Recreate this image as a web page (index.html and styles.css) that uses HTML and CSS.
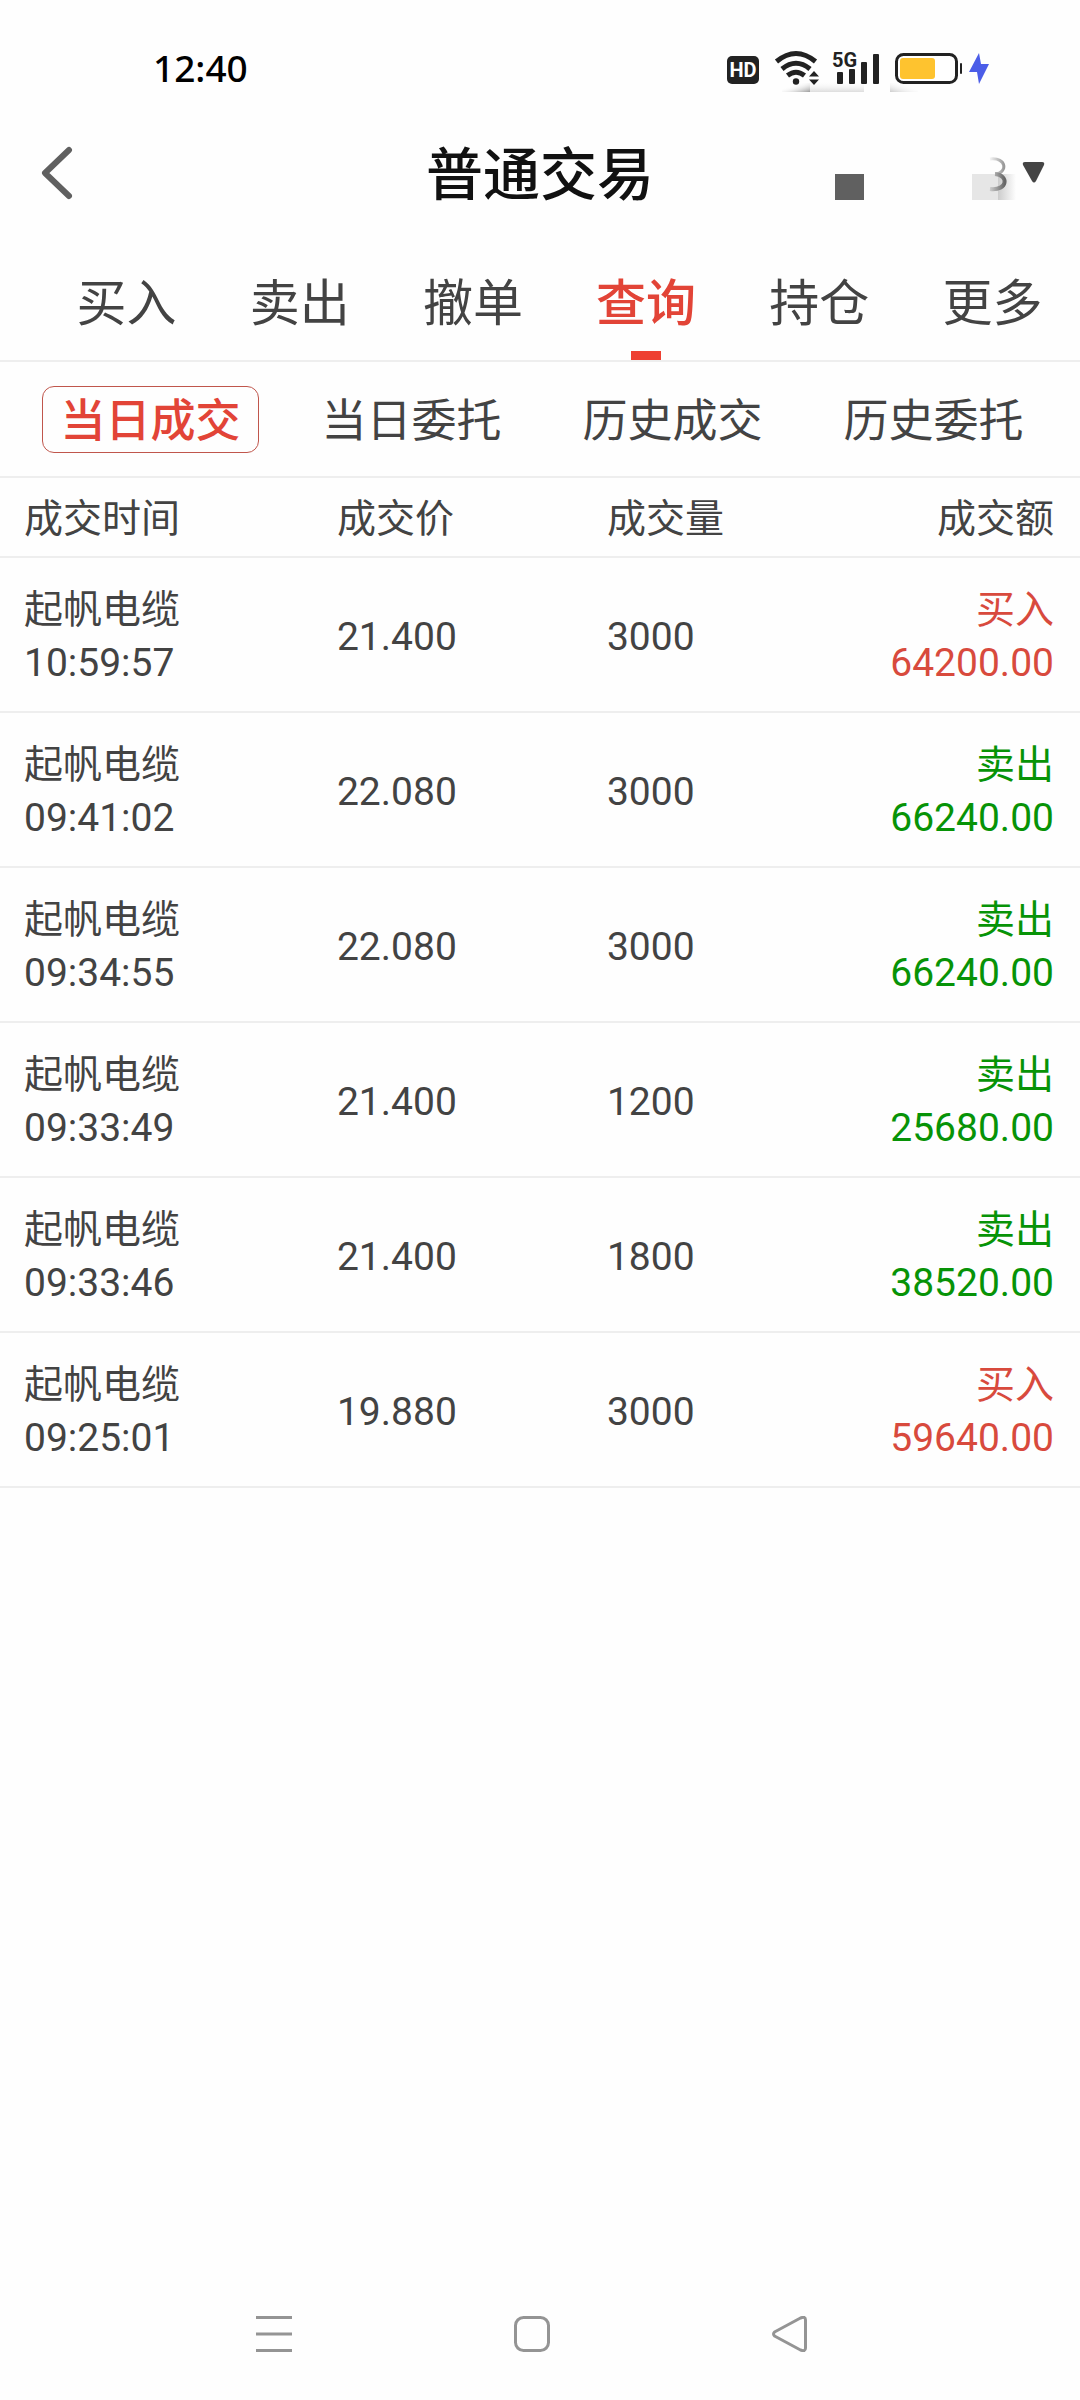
FILE: index.html
```html
<!DOCTYPE html>
<html lang="zh-CN">
<head>
<meta charset="utf-8">
<meta name="viewport" content="width=device-width, initial-scale=1">
<title>普通交易</title>
<link rel="stylesheet" href="styles.css">
</head>
<body>
<div class="status">
  <time class="clock">12:40</time>
  <svg class="status-icons" viewBox="724 48 268 46" aria-hidden="true">
    <defs>
      <linearGradient id="fade-dark" x1="0" y1="0" x2="1" y2="1"><stop offset=".3" stop-color="#fff" stop-opacity="0"/><stop offset="1" stop-color="#999"/></linearGradient>
      <linearGradient id="fade-light" x1="0" y1="0" x2="0" y2="1"><stop offset="0" stop-color="#fff" stop-opacity="0"/><stop offset="1" stop-color="#ddd"/></linearGradient>
      <linearGradient id="fade-left" x1="1" y1="0" x2="0" y2="1"><stop offset=".3" stop-color="#fff" stop-opacity="0"/><stop offset="1" stop-color="#ccc"/></linearGradient>
    </defs>
    <rect x="782" y="83" width="28" height="9" fill="url(#fade-dark)"/>
    <rect x="810" y="81" width="54" height="11" fill="url(#fade-light)"/>
    <rect x="890" y="83" width="28" height="9" fill="url(#fade-left)"/>
    <rect x="727" y="56" width="32" height="28" rx="5" fill="#222"/>
    <text class="hd" x="743" y="77" text-anchor="middle">HD</text>
    <g fill="none" stroke="#222" stroke-width="5">
      <path d="M776.500 61.500Q796 45.500 815.500 61.500"/>
      <path d="M782 69Q796 57.500 810 69"/>
      <path d="M787.500 75.500Q796 69 804.500 75.500"/>
    </g>
    <circle cx="796" cy="81.500" r="3.200" fill="#222"/>
    <path d="M814 71l5 5.500h-10zM814 85l5-5.500h-10z" fill="#222"/>
    <text class="net" x="832" y="67">5G</text>
    <g fill="#222">
      <rect x="837" y="72" width="6" height="12" rx="1"/>
      <rect x="849" y="69" width="6" height="15" rx="1"/>
      <rect x="861" y="62" width="6" height="22" rx="1"/>
      <rect x="873" y="54" width="6" height="30" rx="1"/>
    </g>
    <rect x="896.500" y="54.500" width="60" height="28" rx="7" fill="#fff" stroke="#222" stroke-width="3"/>
    <rect x="900" y="58" width="35" height="21" rx="3" fill="#fec32f"/>
    <rect x="960" y="63" width="2" height="11" rx="1" fill="#222"/>
    <path d="M979 53L969 72h8l2 12 10-20h-8z" fill="#4b5de8"/>
  </svg>
</div>

<header class="header">
  <button class="back" type="button" aria-label="返回">
    <svg viewBox="0 0 32 54" fill="none" stroke="#606060" stroke-width="6" stroke-linecap="round" stroke-linejoin="round"><path d="M28 4L4 27l24 23"/></svg>
  </button>
  <h1 class="title">普通交易</h1>
  <button class="account" type="button" aria-label="切换账户">
    <svg viewBox="0 0 212 48">
      <defs>
        <linearGradient id="digit-top" x1="0" y1="0" x2="1" y2="0"><stop offset="0" stop-color="#f4f4f4"/><stop offset="1" stop-color="#999"/></linearGradient>
        <linearGradient id="digit-bottom" x1="0" y1="0" x2="1" y2="0"><stop offset="0" stop-color="#ccc"/><stop offset="1" stop-color="#666"/></linearGradient>
        <linearGradient id="veil" x1="0" y1="0" x2="1" y2="0"><stop offset="0" stop-color="#ccc"/><stop offset="1" stop-color="#fefefe"/></linearGradient>
      </defs>
      <rect x="3" y="25" width="29" height="26" fill="#606060"/>
      <rect x="140" y="25" width="26" height="26" fill="#e6e6e6"/>
      <rect x="166" y="25" width="18" height="26" fill="url(#veil)"/>
      <path d="M158 10c17-2 18 14 5 15" fill="none" stroke="url(#digit-top)" stroke-width="3"/>
      <path d="M163 25c14 1 13 17-5 15" fill="none" stroke="url(#digit-bottom)" stroke-width="4"/>
      <path d="M193 13h17q3 0 2 3l-8 16q-2 3-4 0l-9-16q-1-3 2-3z" fill="#444"/>
    </svg>
  </button>
</header>

<nav class="tabs">
  <a href="#buy">买入</a>
  <a href="#sell">卖出</a>
  <a href="#cancel">撤单</a>
  <a href="#query" class="active" aria-current="page">查询</a>
  <a href="#positions">持仓</a>
  <a href="#more">更多</a>
</nav>

<nav class="filters">
  <a href="#today-deals" class="active" aria-current="page">当日成交</a>
  <a href="#today-orders">当日委托</a>
  <a href="#past-deals">历史成交</a>
  <a href="#past-orders">历史委托</a>
</nav>

<main>
  <table class="deals">
    <thead>
      <tr><th class="time">成交时间</th><th class="price">成交价</th><th class="volume">成交量</th><th class="amount">成交额</th></tr>
    </thead>
    <tbody>
      <tr><td>起帆电缆<br>10:59:57</td><td>21.400</td><td>3000</td><td class="amount buy">买入<br>64200.00</td></tr>
      <tr><td>起帆电缆<br>09:41:02</td><td>22.080</td><td>3000</td><td class="amount sell">卖出<br>66240.00</td></tr>
      <tr><td>起帆电缆<br>09:34:55</td><td>22.080</td><td>3000</td><td class="amount sell">卖出<br>66240.00</td></tr>
      <tr><td>起帆电缆<br>09:33:49</td><td>21.400</td><td>1200</td><td class="amount sell">卖出<br>25680.00</td></tr>
      <tr><td>起帆电缆<br>09:33:46</td><td>21.400</td><td>1800</td><td class="amount sell">卖出<br>38520.00</td></tr>
      <tr><td>起帆电缆<br>09:25:01</td><td>19.880</td><td>3000</td><td class="amount buy">买入<br>59640.00</td></tr>
    </tbody>
  </table>
</main>

<footer class="system-nav">
  <button type="button" aria-label="最近任务"><svg viewBox="0 0 36 36" stroke="#949494" stroke-width="3"><path d="M0 1.500h36M0 18h36M0 34.500h36"/></svg></button>
  <button type="button" aria-label="主屏幕"><svg viewBox="0 0 36 36" fill="none" stroke="#949494" stroke-width="3"><rect x="1.500" y="1.500" width="33" height="33" rx="8"/></svg></button>
  <button type="button" aria-label="后退"><svg viewBox="0 0 36 36" fill="none" stroke="#949494" stroke-width="3" stroke-linejoin="round"><path d="M2.500 16L28.500 2Q33.500 0 33.500 4V32Q33.500 36 28.500 34L2.500 20Q.5 18 2.500 16Z"/></svg></button>
</footer>
</body>
</html>
```
FILE: styles.css
```css
* { box-sizing: border-box; }

body {
  display: flex;
  flex-direction: column;
  min-height: 100vh;
  margin: 0;
  background: #fefefe;
  color: #434343;
  font-family: Roboto, "Noto Sans CJK SC", sans-serif;
  font-size: 39px;
}

a { color: inherit; text-decoration: none; }

button {
  display: flex;
  padding: 0;
  border: 0;
  background: none;
}

svg { display: block; }

.status {
  display: flex;
  align-items: center;
  justify-content: space-between;
  height: 138px;
  padding: 4px 88px 0 153px;
}

.clock {
  padding-bottom: 8px;
  color: #000;
  font-family: "Noto Sans", sans-serif;
  font-size: 37px;
  font-weight: 500;
}

.status-icons { width: 268px; height: 46px; }
.hd { fill: #fff; font: 700 20px Roboto, sans-serif; }
.net { fill: #222; font: 700 20px Roboto, sans-serif; }

.header {
  display: grid;
  grid-template-columns: 1fr auto 1fr;
  align-items: center;
  height: 70px;
  padding: 0 36px;
}

.back { margin-left: 5px; }
.back svg { width: 32px; height: 54px; }

.title {
  margin: 0;
  padding-top: 6px;
  color: #111;
  font-size: 57px;
  font-weight: 500;
  line-height: 64px;
}

.account { justify-self: end; }
.account svg { width: 212px; height: 48px; overflow: visible; }

.tabs {
  display: grid;
  grid-template-columns: repeat(6, 1fr);
  height: 154px;
  padding: 0 1px 0 40px;
  border-bottom: 2px solid #eee;
  font-size: 50px;
}

.tabs a {
  display: flex;
  align-items: center;
  justify-content: center;
  padding-top: 30px;
}

.active { color: #e24437; font-weight: 500; }

.tabs .active { position: relative; }

.tabs .active::after {
  content: "";
  position: absolute;
  bottom: 0;
  left: calc(50% - 15px);
  width: 30px;
  height: 9px;
  background: #ee4032;
}

.filters {
  display: grid;
  grid-template-columns: repeat(4, 1fr);
  align-items: center;
  justify-items: center;
  height: 116px;
  padding: 0 16px 0 20px;
  border-bottom: 2px solid #eee;
  font-size: 45px;
}

.filters a {
  padding-top: 6px;
  line-height: 60px;
}

.filters .active {
  padding: 5px 17px 0;
  border: 1px solid #c0564c;
  border-radius: 12px;
}

.deals {
  width: 100%;
  border-collapse: separate;
  border-spacing: 0;
  table-layout: fixed;
}

.deals th,
.deals td {
  padding: 5px 0 0;
  border-bottom: 2px solid #eee;
  font-weight: 400;
  line-height: 53px;
  text-align: left;
}

.deals th { height: 80px; }
.deals td { height: 155px; }

.deals th:first-child,
.deals td:first-child { padding-left: 24px; }

.deals .amount { padding-right: 26px; text-align: right; }

.time { width: 31.2%; }
.price { width: 25%; }
.volume { width: 19%; }

.deals .buy { color: #d84a3d; }
.deals .sell { color: #079307; }

.system-nav {
  display: grid;
  grid-template-columns: repeat(3, 1fr);
  align-items: center;
  justify-items: center;
  height: 132px;
  margin-top: auto;
  padding: 0 161px 0 145px;
}

.system-nav svg { width: 36px; height: 36px; }
```
